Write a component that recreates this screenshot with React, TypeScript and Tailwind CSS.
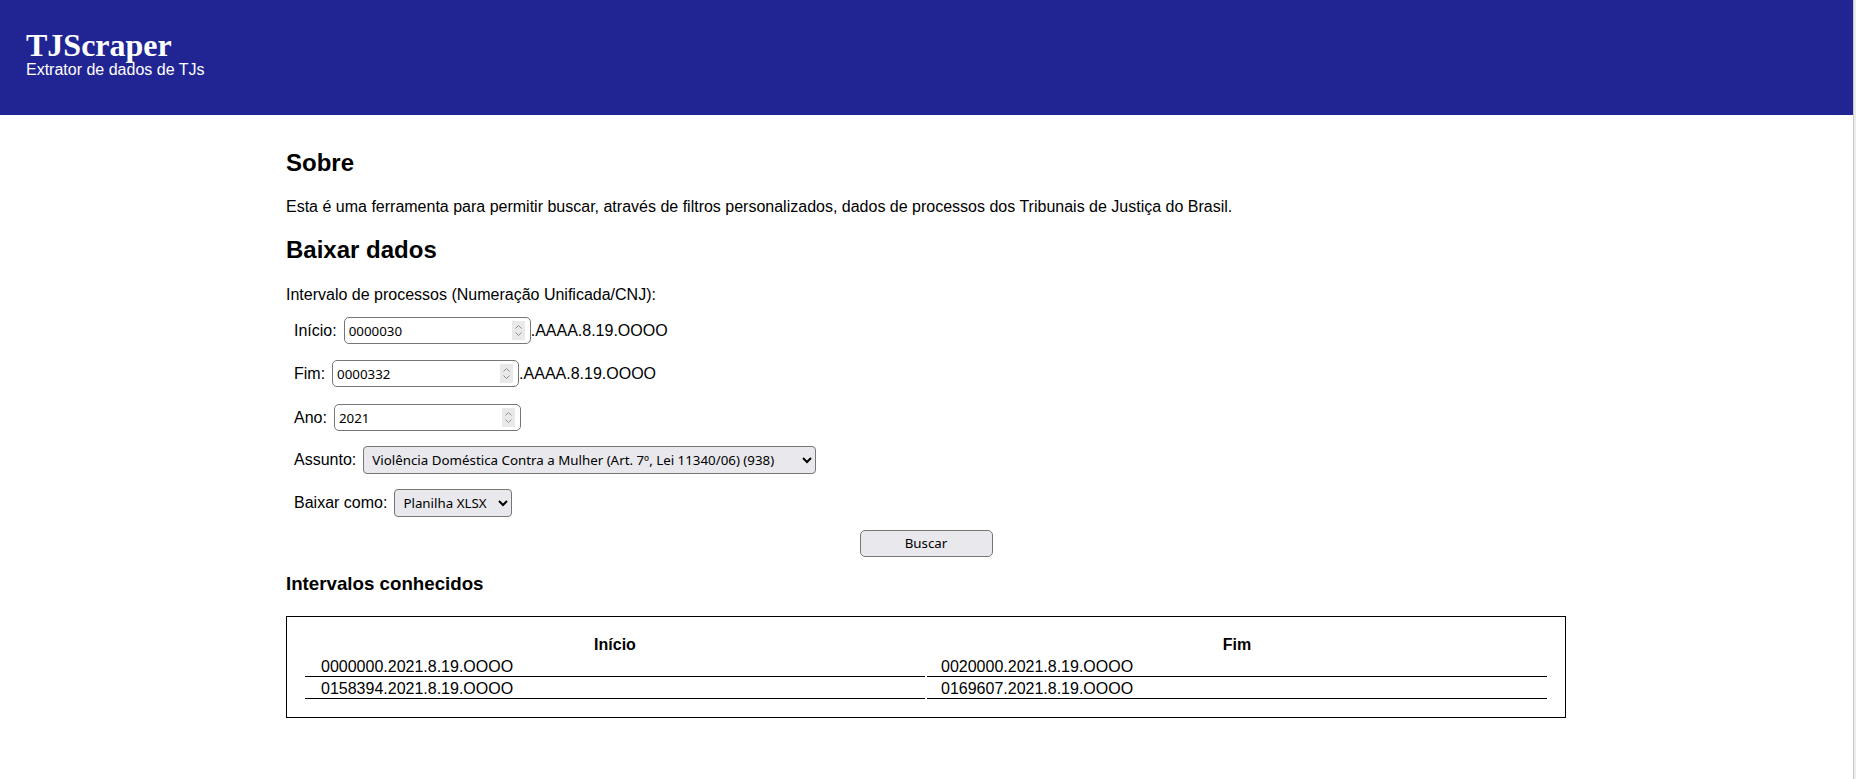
import React from "react";

const ctrlFont = "font-[system-ui,sans-serif]";

const selectCls = `ml-[7px] h-[28px] rounded-[4px] border border-[#767676] bg-[#e9e9ed] pl-[4px] pr-[4px] text-[13.33px] text-black ${ctrlFont} outline-none`;

function Spinner() {
  return (
    <span className="flex h-[19px] w-[13px] shrink-0 items-center justify-center bg-[#e9e9e9]">
      <svg width="9" height="15" viewBox="0 0 9 15" fill="none" stroke="#8f8f8f" strokeWidth="1">
        <path d="M1.5 5.5 L4.5 2.5 L7.5 5.5" />
        <path d="M1.5 9.5 L4.5 12.5 L7.5 9.5" />
      </svg>
    </span>
  );
}

function NumRow({
  label,
  value,
  suffix,
  className,
}: {
  label: string;
  value: string;
  suffix?: string;
  className: string;
}) {
  return (
    <div className={`ml-[8px] flex h-[27px] items-center ${className}`}>
      <span className="leading-[18px]">{label}</span>
      <div className="ml-[7px] flex h-[27px] w-[187px] items-center rounded-[5px] border border-[#767676] bg-white pl-[4px] pr-[5px]">
        <input
          type="number"
          defaultValue={value}
          className={`min-w-0 flex-1 bg-transparent pt-[3px] text-[13.33px] text-black outline-none ${ctrlFont} [appearance:textfield] [&::-webkit-inner-spin-button]:appearance-none [&::-webkit-outer-spin-button]:appearance-none`}
        />
        <Spinner />
      </div>
      {suffix ? <span className="leading-[18px]">{suffix}</span> : null}
    </div>
  );
}

export default function App() {
  const rows = [
    ["0000000.2021.8.19.OOOO", "0020000.2021.8.19.OOOO"],
    ["0158394.2021.8.19.OOOO", "0169607.2021.8.19.OOOO"],
  ];
  return (
    <div className="min-h-screen bg-white text-[16px] text-black font-['Liberation_Sans',Arial,sans-serif]">
      <header className="h-[115px] bg-[#202593] pl-[26px] pt-[29px] text-white">
        <h1 className="text-[32px] leading-[32px] font-bold font-['Liberation_Serif','Times_New_Roman',serif]">
          TJScraper
        </h1>
        <p className="text-[16px] leading-[18px]">Extrator de dados de TJs</p>
      </header>

      <main className="ml-[286px] w-[1280px] pt-[34px] pb-[40px]">
        <h2 className="text-[24px] leading-[28px] font-bold">Sobre</h2>
        <p className="mt-[21px] leading-[18px]">
          Esta é uma ferramenta para permitir buscar, através de filtros personalizados, dados de processos dos
          Tribunais de Justiça do Brasil.
        </p>
        <h2 className="mt-[20px] text-[24px] leading-[28px] font-bold">Baixar dados</h2>
        <p className="mt-[22px] leading-[18px]">Intervalo de processos (Numeração Unificada/CNJ):</p>

        <NumRow className="mt-[13px]" label="Início:" value="0000030" suffix=".AAAA.8.19.OOOO" />
        <NumRow className="mt-[16px]" label="Fim:" value="0000332" suffix=".AAAA.8.19.OOOO" />
        <NumRow className="mt-[17px]" label="Ano:" value="2021" />

        <div className="ml-[8px] mt-[15px] flex h-[28px] items-center">
          <span className="leading-[18px]">Assunto:</span>
          <select className={`${selectCls} w-[453px]`} defaultValue="938">
            <option value="938">Violência Doméstica Contra a Mulher (Art. 7º, Lei 11340/06) (938)</option>
          </select>
        </div>

        <div className="ml-[8px] mt-[15px] flex h-[28px] items-center">
          <span className="leading-[18px]">Baixar como:</span>
          <select className={`${selectCls} w-[118px]`} defaultValue="xlsx">
            <option value="xlsx">Planilha XLSX</option>
          </select>
        </div>

        <div className="mt-[13px] flex justify-center">
          <button
            className={`h-[27px] w-[133px] rounded-[5px] border border-[#767676] bg-[#e9e9ed] text-[13.33px] text-black ${ctrlFont}`}
          >
            Buscar
          </button>
        </div>

        <h3 className="mt-[16px] text-[18.72px] leading-[22px] font-bold">Intervalos conhecidos</h3>

        <div className="mt-[21px] border border-black p-[16px]">
          <table className="w-full border-separate border-spacing-[2px]">
            <thead>
              <tr>
                <th className="w-1/2 p-0 text-center leading-[20px] font-bold">Início</th>
                <th className="w-1/2 p-0 text-center leading-[20px] font-bold">Fim</th>
              </tr>
            </thead>
            <tbody>
              {rows.map((r, i) => (
                <tr key={i}>
                  <td className="border-b border-black px-[16px] py-0 text-left leading-[19px]">{r[0]}</td>
                  <td className="border-b border-black px-[14px] py-0 text-left leading-[19px]">{r[1]}</td>
                </tr>
              ))}
            </tbody>
          </table>
        </div>
      </main>

      <div className="fixed right-0 top-0 h-full w-[3px] border-l border-[#c8c8c8] bg-[#ececec]" />
    </div>
  );
}
